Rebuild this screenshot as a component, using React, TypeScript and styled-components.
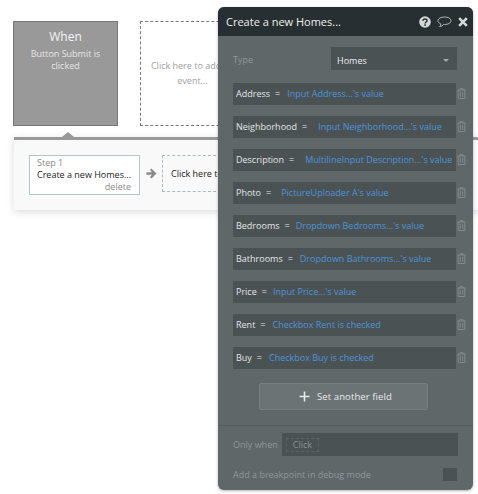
import React from "react";
import styled, { createGlobalStyle } from "styled-components";

const Global = createGlobalStyle`
  html, body { margin: 0; padding: 0; background: #fff; }
  body { font-family: "Open Sans", "Liberation Sans", sans-serif; }
`;

const Page = styled.div`
  position: relative;
  width: 478px;
  height: 494px;
  overflow: hidden;
  background: #fff;
`;
const Events = styled.div`
  display: flex;
  gap: 22px;
  padding: 21px 0 0 13px;
`;
const WhenCard = styled.div`
  box-sizing: border-box;
  width: 105px;
  height: 105px;
  flex: none;
  background: #999;
  border: 1px solid #777;
  color: #fff;
  text-align: center;
  padding-top: 5px;
`;
const WhenTitle = styled.div`
  font-size: 12px;
  line-height: 20px;
  color: #f4f4f4;
`;
const WhenText = styled.div`
  font-size: 9px;
  line-height: 12px;
  margin-top: 1px;
  padding: 0 8px;
  color: #e6e6e6;
`;
const AddEvent = styled.div`
  box-sizing: border-box;
  width: 105px;
  height: 105px;
  flex: none;
  border: 1px dashed #777;
  color: #a0a0a0;
  font-size: 9px;
  line-height: 15px;
  text-align: center;
  padding: 36px 0 0 0;
  white-space: nowrap;
`;
const Strip = styled.div`
  position: relative;
  box-sizing: border-box;
  margin: 11px 0 0 14px;
  width: 480px;
  height: 73px;
  background: #f9f9f9;
  border-top: 3px solid #999;
  box-shadow: 0 2px 8px rgba(0, 0, 0, 0.14);
  display: flex;
  align-items: flex-start;
  padding: 15px 0 0 15px;
`;
const Pointer = styled.div`
  position: absolute;
  left: 48px;
  top: -8px;
  width: 0;
  height: 0;
  border-left: 6px solid transparent;
  border-right: 6px solid transparent;
  border-bottom: 5px solid #999;
`;
const StepCard = styled.div`
  box-sizing: border-box;
  width: 111px;
  height: 40px;
  flex: none;
  background: #fff;
  border: 1px solid #b4c4cb;
  padding: 1px 8px 0 7px;
  font-size: 9px;
  line-height: 12px;
  color: #222;
  white-space: nowrap;
`;
const StepLabel = styled.div`
  color: #888;
`;
const StepDelete = styled.div`
  color: #888;
  text-align: right;
`;
const ArrowSlot = styled.div`
  width: 22px;
  height: 36px;
  flex: none;
  display: flex;
  align-items: center;
  justify-content: center;
`;
const AddAction = styled.div`
  box-sizing: border-box;
  width: 100px;
  height: 37px;
  flex: none;
  border: 1px dashed #a9bac1;
  font-size: 9px;
  line-height: 35px;
  padding-left: 8px;
  color: #222;
  white-space: nowrap;
`;

const Panel = styled.div`
  position: absolute;
  left: 218px;
  top: 7px;
  width: 255px;
  height: 483px;
  background: #5f6769;
  border-radius: 6px;
  box-shadow: 0 1px 3px rgba(0, 0, 0, 0.3);
  display: flex;
  flex-direction: column;
  overflow: hidden;
`;
const Header = styled.div`
  height: 29px;
  flex: none;
  background: #272f32;
  display: flex;
  align-items: center;
  padding: 0 5px 0 8px;
  color: #eee;
  font-size: 11px;
`;
const HeaderTitle = styled.div`
  flex: 1;
`;
const HeaderIcons = styled.div`
  display: flex;
  align-items: center;
  gap: 6px;
`;
const Body = styled.div`
  padding: 11px 16px 0 15px;
  flex: 1;
  display: flex;
  flex-direction: column;
`;
const TypeRow = styled.div`
  display: flex;
  align-items: center;
  justify-content: space-between;
  height: 23px;
  margin-bottom: 13px;
`;
const MutedLabel = styled.div`
  font-size: 9px;
  color: #8f9799;
`;
const TypeLabel = styled(MutedLabel)`
  padding-top: 1px;
`;
const Select = styled.div`
  box-sizing: border-box;
  width: 126px;
  height: 23px;
  background: #4b5254;
  color: #eee;
  font-size: 9px;
  display: flex;
  align-items: center;
  justify-content: space-between;
  padding: 3px 8px 0 6px;
`;
const Caret = styled.div`
  width: 0;
  height: 0;
  border-left: 3px solid transparent;
  border-right: 3px solid transparent;
  border-top: 3.5px solid #aaa;
`;
const FieldList = styled.div`
  display: flex;
  flex-direction: column;
  gap: 11px;
`;
const FieldRow = styled.div`
  position: relative;
  box-sizing: border-box;
  width: 223px;
  height: 22px;
  background: #4b5254;
  display: flex;
  align-items: center;
  padding-left: 3px;
  padding-bottom: 2px;
  font-size: 9px;
  white-space: nowrap;
`;
const FieldName = styled.span`
  color: #e4e6e6;
`;
const FieldEquals = styled.span`
  color: #e4e6e6;
  margin-left: 5px;
`;
const FieldValue = styled.span<{ $gap: number }>`
  color: #4d94d6;
  margin-left: ${(p) => p.$gap}px;
`;
const TrashSlot = styled.div`
  position: absolute;
  left: 224px;
  top: 5px;
  display: flex;
`;
const AddButton = styled.div`
  box-sizing: border-box;
  width: 169px;
  height: 27px;
  margin: 14px 0 0 26px;
  flex: none;
  background: #6b7375;
  border: 1px solid #777f81;
  border-radius: 2px;
  color: #e8e9e9;
  font-size: 9.5px;
  letter-spacing: 0.1px;
  display: flex;
  align-items: center;
  padding-left: 39px;
  gap: 7px;
`;
const Footer = styled.div`
  box-sizing: border-box;
  border-top: 1px solid #565d5f;
  height: 65px;
  flex: none;
  padding: 7px 15px 0 15px;
`;
const OnlyRow = styled.div`
  display: flex;
  align-items: center;
  height: 23px;
  gap: 4px;
`;
const Condition = styled.div`
  box-sizing: border-box;
  width: 176px;
  height: 23px;
  background: #4b5254;
  display: flex;
  align-items: center;
  padding-left: 4px;
`;
const ClickChip = styled.div`
  border: 1px dashed #5c6365;
  color: #8a9294;
  font-size: 9px;
  line-height: 12px;
  padding: 0 6px;
`;
const BreakRow = styled.div`
  display: flex;
  align-items: center;
  justify-content: space-between;
  margin-top: 12px;
  margin-right: 1px;
  height: 13px;
`;
const Check = styled.div`
  width: 14px;
  height: 13px;
  background: #4b5254;
`;

const Trash = () => (
  <svg width="9" height="11" viewBox="0 0 9 11" fill="none" stroke="#838b8d" strokeWidth="1">
    <path d="M0.5 2h8M3 2V0.7h3V2M1.2 2v8.5h6.6V2M3.3 3.8v5M5.7 3.8v5" />
  </svg>
);

const fields: [string, number, string][] = [
  ["Address", 7, "Input Address...'s value"],
  ["Neighborhood", 11, "Input Neighborhood...'s value"],
  ["Description", 11, "MultilineInput Description...'s value"],
  ["Photo", 10, "PictureUploader A's value"],
  ["Bedrooms", 6, "Dropdown Bedrooms...'s value"],
  ["Bathrooms", 7, "Dropdown Bathrooms...'s value"],
  ["Price", 6, "Input Price...'s value"],
  ["Rent", 7, "Checkbox Rent is checked"],
  ["Buy", 7, "Checkbox Buy is checked"],
];

export default function App() {
  return (
    <Page>
      <Global />
      <Events>
        <WhenCard>
          <WhenTitle>When</WhenTitle>
          <WhenText>Button Submit is clicked</WhenText>
        </WhenCard>
        <AddEvent>
          Click here to add an
          <br />
          event...
        </AddEvent>
      </Events>
      <Strip>
        <Pointer />
        <StepCard>
          <StepLabel>Step 1</StepLabel>
          <div>Create a new Homes...</div>
          <StepDelete>delete</StepDelete>
        </StepCard>
        <ArrowSlot>
          <svg width="11" height="11" viewBox="0 0 11 11" fill="#8a8a8a">
            <path d="M5.5 0.5L10.5 5.5L5.5 10.5L4 9L6 6.8H0.5V4.2H6L4 2Z" />
          </svg>
        </ArrowSlot>
        <AddAction>Click here to add an action...</AddAction>
      </Strip>
      <Panel>
        <Header>
          <HeaderTitle>Create a new Homes...</HeaderTitle>
          <HeaderIcons>
            <svg width="12" height="12" viewBox="0 0 12 12">
              <circle cx="6" cy="6" r="5.8" fill="#d5d8d8" />
              <path d="M4 4.7C4 2.4 8.1 2.4 8.1 4.6C8.1 6 6.1 6 6.1 7.4" fill="none" stroke="#272f32" strokeWidth="1.5" />
              <rect x="5.3" y="8.3" width="1.6" height="1.6" fill="#272f32" />
            </svg>
            <svg width="15" height="13" viewBox="0 0 15 13" fill="none" stroke="#d5d8d8" strokeWidth="0.8">
              <path d="M7.5 2C11 2 14 3.4 14 5.8C14 8 11 9.5 7.5 9.5L6.5 9.4C5.6 10.6 4.2 11.6 2.6 11.7C3.4 10.9 3.9 9.9 3.8 8.9C2 8.2 1 7.1 1 5.8C1 3.4 4 2 7.5 2Z" />
            </svg>
            <svg width="10" height="10" viewBox="0 0 10 10" stroke="#d5d8d8" strokeWidth="2.6">
              <path d="M1.2 1.2L8.8 8.8M8.8 1.2L1.2 8.8" />
            </svg>
          </HeaderIcons>
        </Header>
        <Body>
          <TypeRow>
            <TypeLabel>Type</TypeLabel>
            <Select>
              Homes
              <Caret />
            </Select>
          </TypeRow>
          <FieldList>
            {fields.map(([name, gap, value]) => (
              <FieldRow key={name}>
                <FieldName>{name}</FieldName>
                <FieldEquals>=</FieldEquals>
                <FieldValue $gap={gap}>{value}</FieldValue>
                <TrashSlot>
                  <Trash />
                </TrashSlot>
              </FieldRow>
            ))}
          </FieldList>
          <AddButton>
            <svg width="11" height="11" viewBox="0 0 11 11" stroke="#e8e9e9" strokeWidth="1.6">
              <path d="M5.5 0.5V10.5M0.5 5.5H10.5" />
            </svg>
            Set another field
          </AddButton>
        </Body>
        <Footer>
          <OnlyRow>
            <MutedLabel>Only when</MutedLabel>
            <Condition>
              <ClickChip>Click</ClickChip>
            </Condition>
          </OnlyRow>
          <BreakRow>
            <MutedLabel>Add a breakpoint in debug mode</MutedLabel>
            <Check />
          </BreakRow>
        </Footer>
      </Panel>
    </Page>
  );
}
